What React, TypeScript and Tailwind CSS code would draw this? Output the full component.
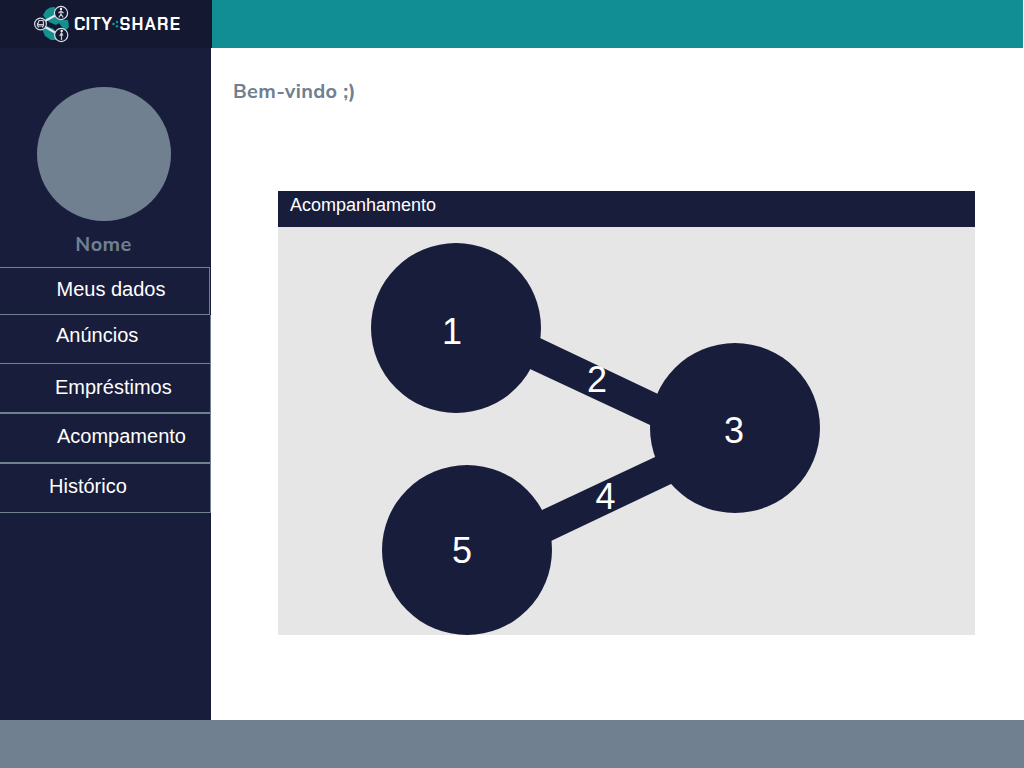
type NavItem = { label: string; box: string };

const navItems: NavItem[] = [
  { label: "Meus dados", box: "h-12 w-[210px] border-t pl-[56.5px] pt-[6px]" },
  { label: "Anúncios", box: "h-[49px] w-[211px] pl-[56px] pt-[5px]" },
  { label: "Empréstimos", box: "h-[49px] w-[211px] pl-[55px] pt-[8px]" },
  { label: "Acompamento", box: "h-[50px] w-[211px] border-t pl-[57px] pt-[7px]" },
  { label: "Histórico", box: "h-[50px] w-[211px] border-t pl-[49px] pt-[7px]" },
];

function Logo() {
  return (
    <svg width="212" height="48" viewBox="0 0 212 48" role="img" aria-label="City Share">
      <g fill="#14908f">
        <path d="M43 15 L46 10 L50 7.5 L55 7 L56 17 L63 20 L68 20 L69 27 L66 30 L62 27 L59 23 L56 25 L49 22 L45 18Z" />
        <path d="M42 29 L47 26 L54 29 L57 40 L51 40 L45 36Z" />
      </g>
      <g stroke="#e2e6ed" strokeWidth="2">
        <path d="M45 21 L56 15 M45 27 L56 33" />
      </g>
      <g fill="#141830" stroke="#d9dde5" strokeWidth="1.2">
        <circle cx="40.5" cy="24" r="5.9" />
        <circle cx="61" cy="13" r="6.6" />
        <circle cx="61.2" cy="35" r="6.6" />
      </g>
      <g stroke="#c9ced8" strokeWidth="1.2" fill="none">
        <path d="M38 23.5 L39 20.5 H43 L43.5 23 V26 H37.5 V23.5Z M38 24.5 H43 M38.5 27.5 V26 M42.5 27.5 V26" />
        <path d="M61 10.5 V14 L58.8 17.5 M61 14 L63.2 17.5 M58.5 13 L61 11 L63.5 13" />
        <path d="M61.5 32.5 V40 M59.7 36 L61.5 33 L63 35.5" />
      </g>
      <g fill="#f3f5f8">
        <circle cx="61" cy="9" r="1.2" />
        <circle cx="61.7" cy="31" r="1.2" />
      </g>
      <g
        fill="#fff"
        fontFamily="'Chakra Petch', Rajdhani, Inter, sans-serif"
        fontWeight="700"
        fontSize="17"
      >
        <text x="74" y="30" textLength="38" lengthAdjust="spacing">CITY</text>
        <text x="119.5" y="30" textLength="60.5" lengthAdjust="spacing">SHARE</text>
      </g>
      <g fill="#149a9a">
        <circle cx="113.5" cy="24" r="1.3" />
        <circle cx="117" cy="22" r="1.2" />
        <circle cx="117" cy="26.3" r="1.2" />
      </g>
    </svg>
  );
}

function Diagram() {
  return (
    <svg className="block" width="697" height="408" viewBox="278 227 697 408">
      <g fill="#191d3c">
        <circle cx="456" cy="328" r="85" />
        <circle cx="735" cy="428" r="85" />
        <circle cx="467" cy="550" r="85" />
        <path d="M540 338 L658 394 L680 440 L650 425 L530 369 L500 340Z" />
        <path d="M542 510 L655 457 L700 450 L671 484 L551 541 L510 530Z" />
      </g>
      <g fill="#fff" fontFamily="'Liberation Sans', Arial, sans-serif" fontSize="36" textAnchor="middle">
        <text x="452" y="344">1</text>
        <text x="597" y="392">2</text>
        <text x="734" y="443">3</text>
        <text x="605.5" y="509">4</text>
        <text x="462" y="563">5</text>
      </g>
    </svg>
  );
}

export default function App() {
  return (
    <div className="flex h-[768px] w-[1024px] flex-col overflow-hidden bg-white font-['Liberation_Sans',Arial,sans-serif]">
      <header className="flex h-12 shrink-0 pr-px">
        <div className="w-[212px] bg-[#141830]">
          <Logo />
        </div>
        <div className="flex-1 bg-[#108e94]" />
      </header>
      <div className="flex h-[672px]">
        <aside className="flex w-[211px] flex-col bg-[#191d3c] pt-[39px]">
          <div className="ml-[37px] size-[134px] shrink-0 rounded-full bg-[#708090]" />
          <div className="flex h-[46px] shrink-0 justify-center pr-[4px] pt-[9px] font-['Nunito_Sans','Liberation_Sans',sans-serif] text-[20px] leading-[30px] font-bold tracking-[0.35px] text-[#708090]">
            Nome
          </div>
          <nav>
            {navItems.map((item) => (
              <a
                key={item.label}
                className={`block border-r border-b border-[#708090] text-[20px] leading-[30px] text-white ${item.box}`}
              >
                {item.label}
              </a>
            ))}
          </nav>
        </aside>
        <main className="flex-1 pl-[22px] pt-[29px]">
          <h1 className="h-[114px] font-['Nunito_Sans','Liberation_Sans',sans-serif] text-[20px] leading-[30px] font-bold tracking-[0.35px] text-[#708090]">
            Bem-vindo ;)
          </h1>
          <section className="ml-[45px] w-[697px] bg-[#e6e6e6]">
            <h2 className="h-9 bg-[#191d3c] pl-[12px] text-[18px] leading-[28px] text-white">Acompanhamento</h2>
            <Diagram />
          </section>
        </main>
      </div>
      <footer className="h-12 bg-[#708090]" />
    </div>
  );
}
